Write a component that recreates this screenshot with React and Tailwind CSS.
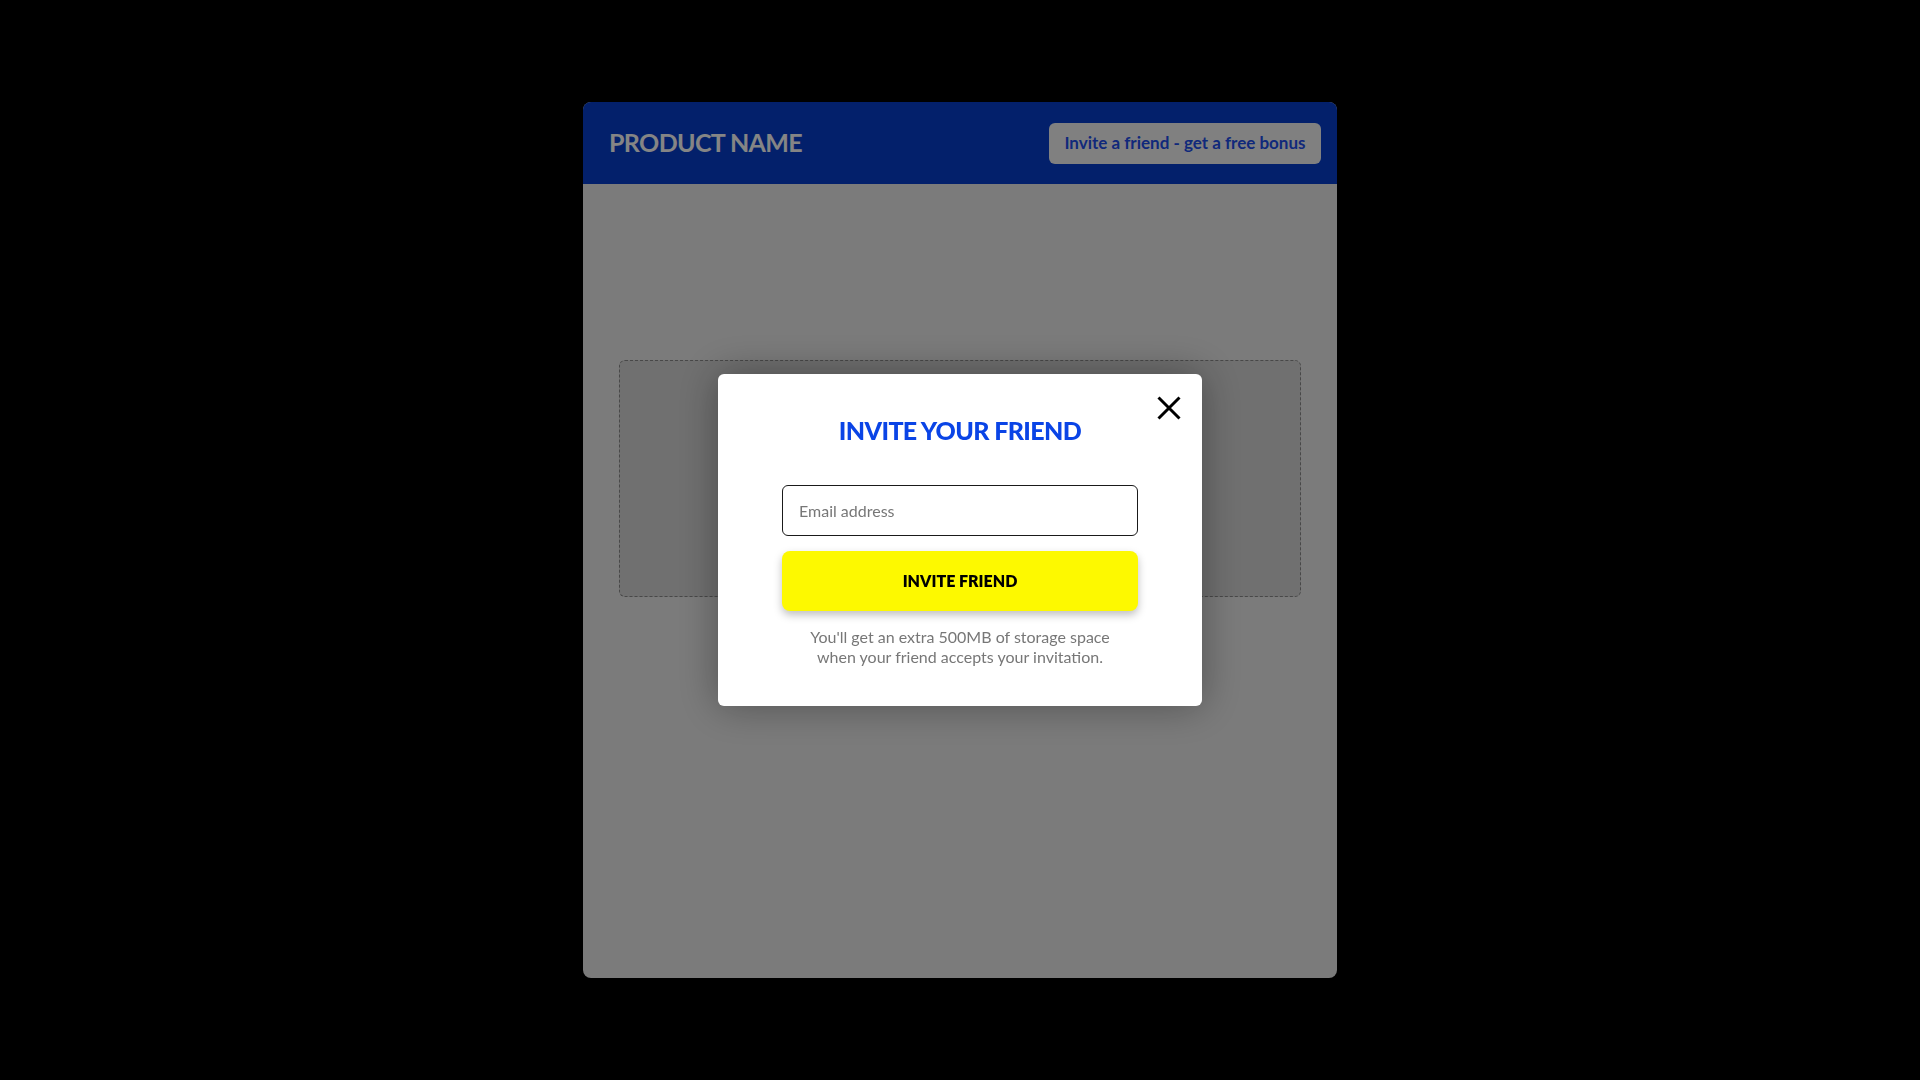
import React, { useState } from "react";

const font = { fontFamily: "Lato, 'Noto Sans', sans-serif" };

const CloseIcon = () => (
  <svg width="24" height="24" viewBox="0 0 24 24" fill="none">
    <path d="M1.5 1.5L22.5 22.5M22.5 1.5L1.5 22.5" stroke="#000" strokeWidth="3" />
  </svg>
);

const App = () => {
  const [email, setEmail] = useState("");

  return (
    <div className="min-h-screen w-full bg-black flex items-center justify-center" style={font}>
      {/* Page */}
      <div className="w-[754px] h-[876px] rounded-lg overflow-hidden bg-[#ebebeb] flex flex-col">
        {/* Header */}
        <div className="h-[82px] shrink-0 bg-[#063fce] flex items-center justify-between pl-[26px] pr-4">
          <h1 className="text-[25px] font-bold text-white tracking-tight">PRODUCT NAME</h1>
          <button className="w-[272px] h-[41px] rounded-md bg-[#f6f6f6] text-[#1f4feb] text-[17px] font-bold">
            Invite a friend - get a free bonus
          </button>
        </div>

        {/* Body */}
        <div className="flex-1 px-9 pt-[176px]">
          <div className="h-[237px] rounded-md border border-dashed border-[#8a8a8a] bg-[#d6d6d6]" />
        </div>
      </div>

      {/* Overlay */}
      <div className="fixed inset-0 bg-black/[0.48] flex items-center justify-center">
        <div className="relative w-[484px] h-[332px] bg-white rounded-md shadow-[0_0_40px_rgba(0,0,0,0.35)] px-16 pt-10 flex flex-col items-center">
          <button className="absolute top-[22px] right-[21px]">
            <CloseIcon />
          </button>
          <h2 className="text-[25px] leading-8 font-black text-[#0a44e6] tracking-tight">
            INVITE YOUR FRIEND
          </h2>
          <input
            value={email}
            onChange={(e) => setEmail(e.target.value)}
            placeholder="Email address"
            className="mt-[39px] w-full h-[51px] rounded-md border border-[#1a1a1a] px-4 text-base text-gray-800 placeholder:text-[#777] outline-none"
          />
          <button className="mt-[15px] w-full h-[60px] rounded-lg bg-[#fdf900] shadow-[0_4px_8px_rgba(0,0,0,0.25)] text-base font-extrabold text-black">
            INVITE FRIEND
          </button>
          <p className="mt-4 text-base leading-5 text-[#777] text-center">
            You'll get an extra 500MB of storage space
            <br />
            when your friend accepts your invitation.
          </p>
        </div>
      </div>
    </div>
  );
};

export default App;
